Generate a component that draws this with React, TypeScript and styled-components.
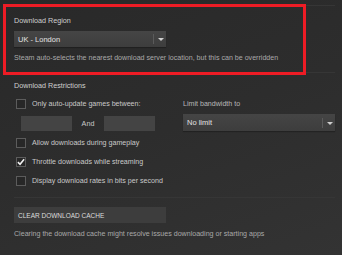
import React from 'react';
import styled, { createGlobalStyle } from 'styled-components';

const GlobalStyle = createGlobalStyle`
  html, body {
    margin: 0;
    padding: 0;
    background: #2b2b2b;
  }
  body {
    font-family: 'Liberation Sans', Arial, sans-serif;
    width: 342px;
    height: 255px;
    overflow: hidden;
  }
`;

export default function App() {
  return (
    <>
      <GlobalStyle />
      <Page>
        <Section pad="10px 0 9px">
          <Heading>Download Region</Heading>
          <Select>
            <SelectValue>UK - London</SelectValue>
            <SelectArrow />
          </Select>
          <Hint>Steam auto-selects the nearest download server location, but this can be overridden</Hint>
        </Section>

        <Section pad="8px 0 11px">
          <Heading>Download Restrictions</Heading>
          <RestrictGrid>
            <Column>
              <CheckRow>
                <Box />
                <CheckLabel>Only auto-update games between:</CheckLabel>
              </CheckRow>
              <TimeRow>
                <TimeInput />
                <AndLabel>And</AndLabel>
                <TimeInput />
              </TimeRow>
            </Column>
            <Column>
              <SideLabel>Limit bandwidth to</SideLabel>
              <Select tall>
                <SelectValue>No limit</SelectValue>
                <SelectArrow />
              </Select>
            </Column>
          </RestrictGrid>
          <CheckList>
            <CheckRow>
              <Box />
              <CheckLabel>Allow downloads during gameplay</CheckLabel>
            </CheckRow>
            <CheckRow>
              <Box>
                <svg width="9" height="8" viewBox="0 0 9 8">
                  <path d="M1 4.2 L3.4 6.5 L8 1" stroke="#f2f2f2" strokeWidth="1.8" fill="none" />
                </svg>
              </Box>
              <CheckLabel>Throttle downloads while streaming</CheckLabel>
            </CheckRow>
            <CheckRow>
              <Box />
              <CheckLabel>Display download rates in bits per second</CheckLabel>
            </CheckRow>
          </CheckList>
        </Section>

        <Section pad="9px 0 0">
          <ActionButton>CLEAR DOWNLOAD CACHE</ActionButton>
          <Hint>Clearing the download cache might resolve issues downloading or starting apps</Hint>
        </Section>

        <Highlight />
      </Page>
    </>
  );
}

const Page = styled.div`
  position: relative;
  width: 342px;
  height: 255px;
  box-sizing: border-box;
  padding: 5px 7px 0 14px;
  background: linear-gradient(160deg, #292929 0%, #2d2d2d 50%, #333333 100%);
  color: #c9c9c9;
`;

const Section = styled.div<{ pad: string }>`
  border-top: 1px solid #363636;
  display: flex;
  flex-direction: column;
  padding: ${p => p.pad};
`;

const Heading = styled.div`
  font-size: 7.2px;
  line-height: 10px;
  color: #cfcfcf;
  margin-bottom: 5px;
`;

const Select = styled.div<{ tall?: boolean }>`
  width: 152px;
  height: ${p => (p.tall ? '17px' : '16px')};
  box-sizing: border-box;
  background: linear-gradient(180deg, #454545 0%, #3d3d3d 100%);
  display: flex;
  align-items: center;
  box-shadow: 0 1px 1px rgba(0, 0, 0, 0.25);
`;

const SelectValue = styled.span`
  flex: 1;
  padding-left: 4px;
  font-size: 7.5px;
  color: #e2e2e2;
`;

const SelectArrow = styled.span`
  width: 13px;
  height: 10px;
  border-left: 1px solid #5a5a5a;
  box-sizing: border-box;
  position: relative;

  &::after {
    content: '';
    position: absolute;
    left: 4px;
    top: 4px;
    border-left: 3px solid transparent;
    border-right: 3px solid transparent;
    border-top: 3px solid #cfcfcf;
  }
`;

const Hint = styled.div`
  font-size: 7.1px;
  line-height: 10px;
  color: #a9a9a9;
  margin-top: 6px;
  white-space: nowrap;
`;

const RestrictGrid = styled.div`
  display: grid;
  grid-template-columns: 169px 152px;
  margin-top: 3px;
`;

const Column = styled.div`
  display: flex;
  flex-direction: column;
`;

const CheckRow = styled.div`
  display: flex;
  align-items: center;
  height: 10px;
  padding-left: 2px;
`;

const Box = styled.span`
  width: 10px;
  height: 10px;
  box-sizing: border-box;
  border: 1px solid #5c5c5c;
  background: #272727;
  display: flex;
  align-items: center;
  justify-content: center;
  flex-shrink: 0;
`;

const CheckLabel = styled.span`
  margin-left: 6px;
  font-size: 7.1px;
  color: #c9c9c9;
  white-space: nowrap;
`;

const TimeRow = styled.div`
  display: flex;
  align-items: center;
  margin-top: 7px;
  padding-left: 7px;
`;

const TimeInput = styled.span`
  width: 51px;
  height: 15px;
  background: #444444;
`;

const AndLabel = styled.span`
  width: 32px;
  text-align: center;
  font-size: 7.2px;
  color: #c9c9c9;
`;

const SideLabel = styled.div`
  font-size: 7.1px;
  line-height: 10px;
  color: #b8b8b8;
  margin-bottom: 5px;
`;

const CheckList = styled.div`
  display: flex;
  flex-direction: column;
  gap: 9px;
  margin-top: 7px;
`;

const ActionButton = styled.div`
  width: 152px;
  height: 16px;
  box-sizing: border-box;
  padding-left: 4px;
  display: flex;
  align-items: center;
  background: #3d3d3d;
  font-size: 6.5px;
  color: #dcdcdc;
`;

const Highlight = styled.div`
  position: absolute;
  left: 3px;
  top: 4px;
  width: 303px;
  height: 71px;
  box-sizing: border-box;
  border: 3px solid #ee1c25;
  pointer-events: none;
`;
